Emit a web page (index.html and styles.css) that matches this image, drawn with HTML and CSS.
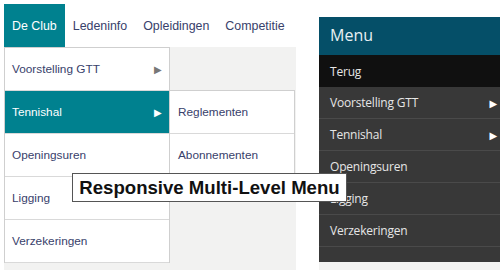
FILE: index.html
```html
<!DOCTYPE html>
<html lang="en">
<head>
	<meta charset="UTF-8">
	<title>Responsive Multi-Level Menu</title>
	<link rel="stylesheet" href="styles.css">
</head>
<body>
	<section class="page">
		<div class="desktop">
			<ul class="topnav">
				<li class="active">De Club</li>
				<li>Ledeninfo</li>
				<li>Opleidingen</li>
				<li>Competitie</li>
			</ul>
			<div class="stage">
				<ul class="dropdown">
					<li>Voorstelling GTT <span class="arrow">&#9654;</span></li>
					<li class="open">Tennishal <span class="arrow">&#9654;</span></li>
					<li>Openingsuren</li>
					<li>Ligging</li>
					<li>Verzekeringen</li>
				</ul>
				<ul class="submenu">
					<li>Reglementen</li>
					<li>Abonnementen</li>
				</ul>
			</div>
		</div>
		<div class="mobile">
			<div class="panel">
				<div class="panel_head">Menu</div>
				<ul class="panel_list">
					<li class="back">Terug</li>
					<li>Voorstelling GTT <span class="arrow">&#9654;</span></li>
					<li>Tennishal <span class="arrow">&#9654;</span></li>
					<li>Openingsuren</li>
					<li>Ligging</li>
					<li>Verzekeringen</li>
					<li class="rest"></li>
				</ul>
			</div>
			<div class="floor"></div>
		</div>
		<div class="caption">Responsive Multi-Level Menu</div>
	</section>
</body>
</html>
```

FILE: styles.css
```css
*{margin:0; padding:0; box-sizing:border-box;}
li{list-style:none;}
body{
	width:500px;
	height:270px;
	overflow:hidden;
	background:#fff;
	font-family:"Liberation Sans", Arial, sans-serif;
}
.page{
	position:relative;
	display:flex;
	width:500px;
	height:270px;
}
/* left: desktop dropdown */
.desktop{
	display:flex;
	flex-direction:column;
	flex-shrink:0;
	width:292px;
	margin:4px 0 0 4px;
}
.topnav{
	display:flex;
	height:43px;
	background:#fff;
}
.topnav li{
	display:flex;
	align-items:center;
	flex-shrink:0;
	padding:0 8px;
	white-space:nowrap;
	font-size:12.4px;
	color:#38416b;
}
.topnav li.active{
	background:#00818f;
	color:#fff;
}
.stage{
	flex:1;
	display:flex;
	align-items:flex-start;
	background:#f2f2f1;
}
.dropdown{
	width:166px;
	border:1px solid #cfcfcf;
	border-bottom:none;
	background:#fff;
}
.dropdown li,
.submenu li{
	display:flex;
	align-items:center;
	justify-content:space-between;
	height:43px;
	padding:0 7px 0 7px;
	border-bottom:1px solid #d9d9d9;
	white-space:nowrap;
	font-size:11.8px;
	color:#38416b;
}
.dropdown li.open{
	background:#00818f;
	color:#fff;
}
.dropdown .arrow{
	font-size:10px;
	color:#777;
}
.dropdown li.open .arrow{color:#fff;}
.submenu{
	width:125px;
	margin-top:43px;
	border:1px solid #cfcfcf;
	border-left:none;
	border-bottom:none;
	background:#fff;
}
.submenu li{padding-left:8px;}
/* right: mobile panel */
.mobile{
	display:flex;
	flex-direction:column;
	flex-shrink:0;
	width:181px;
	margin-left:23px;
	padding-top:17px;
}
.panel{
	background:#383838;
	font-family:"Open Sans", "DejaVu Sans", sans-serif;
	color:#e6e6e6;
}
.panel_head{
	height:38px;
	padding:0 11px;
	line-height:37px;
	font-size:16px;
	background:#054f68;
	color:#e8f0f3;
}
.panel_list li{
	display:flex;
	align-items:center;
	justify-content:space-between;
	height:32px;
	padding:0 3px 0 11px;
	border-bottom:1px solid #4a4a4a;
	font-size:12px;
	letter-spacing:-0.2px;
}
.panel_list li.back{
	background:#101010;
	border-bottom:none;
}
.panel_list li.rest{
	height:15px;
	border-bottom:none;
}
.panel_list .arrow{
	font-size:10px;
	color:#fff;
}
.floor{
	flex:1;
	background:#f2f2f1;
}
.caption{
	position:absolute;
	left:72px;
	top:173px;
	width:275px;
	height:29px;
	border:1px solid #555;
	background:#fff;
	font-size:18.6px;
	font-weight:bold;
	line-height:28px;
	text-align:center;
	color:#111;
}
```
